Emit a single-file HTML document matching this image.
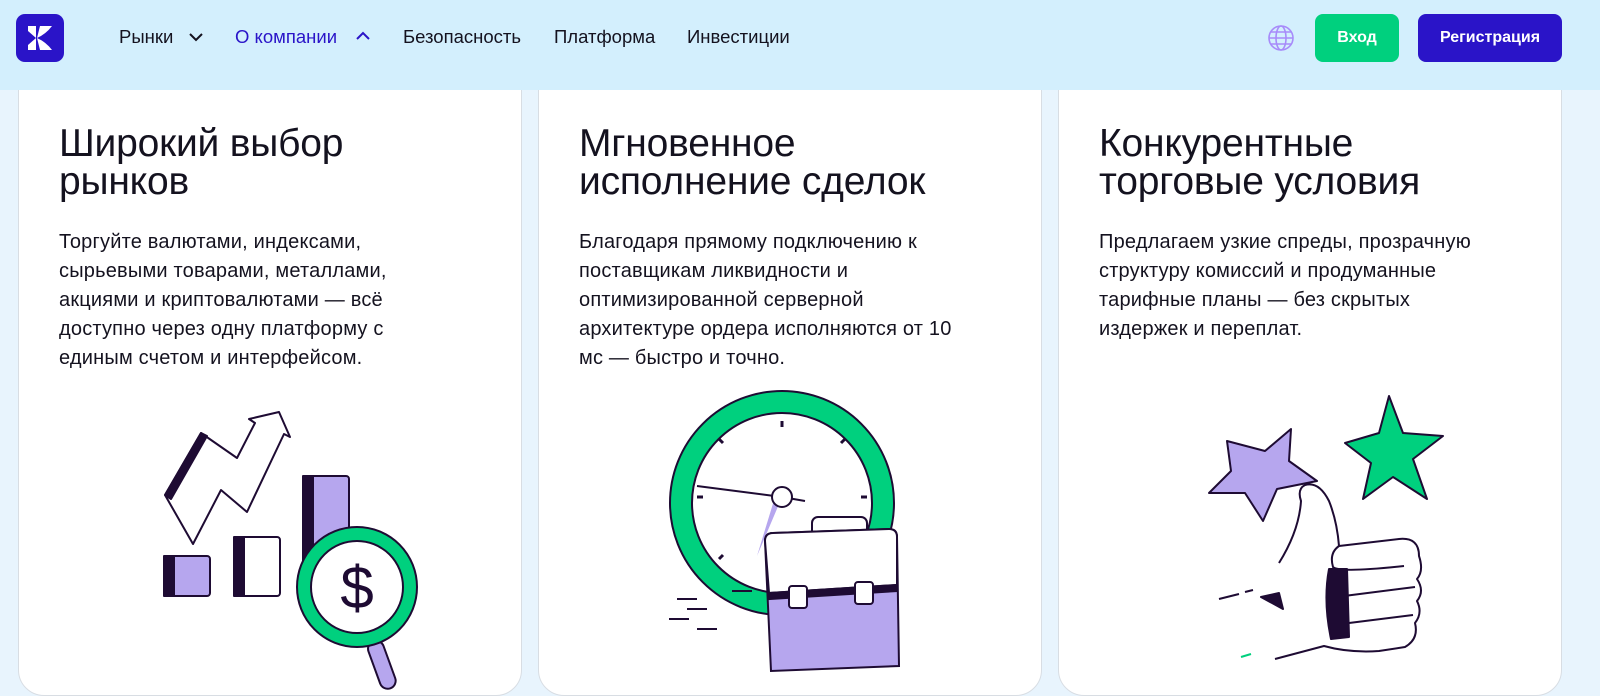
<!DOCTYPE html>
<html><head><meta charset="utf-8"><style>
*{margin:0;padding:0;box-sizing:border-box}
body{width:1600px;height:689px;overflow:hidden;background:#e8f4fd;font-family:"Liberation Sans",sans-serif;position:relative;color:#14121f}
.hdr{position:absolute;left:0;top:0;width:1600px;height:90px;background:#d3effd;z-index:2}
.logo{position:absolute;left:16px;top:14px;width:48px;height:48px;background:#2a14c8;border-radius:9px}
.nav{position:absolute;top:26px;font-size:18.5px;color:#14121f;white-space:nowrap}
.btn{position:absolute;top:14px;height:48px;border-radius:8px;color:#fff;font-size:16px;font-weight:bold;display:flex;align-items:center;justify-content:center}
.card{position:absolute;top:60px;width:504px;height:636px;background:#fff;border-radius:26px;border:1px solid #d8dde3}
.card h2{position:absolute;left:40px;top:64px;font-size:39px;font-weight:normal;line-height:38px;letter-spacing:-0.2px;white-space:nowrap}
.card p{position:absolute;left:40px;top:167px;font-size:20px;line-height:29px;letter-spacing:0.2px;white-space:nowrap}
.card svg{position:absolute;overflow:visible}
</style></head><body>
<div class="hdr">
 <div class="logo"><svg width="48" height="48" viewBox="0 0 48 48"><path d="M12 12h8v24h-8z" fill="#fff"/><path d="M21 24 Q30 20 36 12 L24 12 Z M21 24 Q30 28 36 36 L24 36 Z" fill="#fff"/><path d="M20 24 L12 17 L12 31Z" fill="#2a14c8"/></svg></div>
 <div class="nav" style="left:119px">Рынки</div>
 <svg style="position:absolute;left:188px;top:32px" width="16" height="10"><path d="M2 2l6 6 6-6" stroke="#14121f" stroke-width="2" fill="none"/></svg>
 <div class="nav" style="left:235px;color:#2a14c8">О компании</div>
 <svg style="position:absolute;left:355px;top:31px" width="16" height="10"><path d="M2 8l6-6 6 6" stroke="#2a14c8" stroke-width="2" fill="none"/></svg>
 <div class="nav" style="left:403px">Безопасность</div>
 <div class="nav" style="left:554px">Платформа</div>
 <div class="nav" style="left:687px">Инвестиции</div>
 <svg style="position:absolute;left:1267px;top:24px" width="28" height="28" viewBox="0 0 28 28" fill="none" stroke="#a78bfa" stroke-width="1.6"><circle cx="14" cy="14" r="12"/><ellipse cx="14" cy="14" rx="5" ry="12"/><path d="M2 14h24M4 8h20M4 20h20"/></svg>
 <div class="btn" style="left:1315px;width:84px;background:#00d07e">Вход</div>
 <div class="btn" style="left:1418px;width:144px;background:#2a14c8">Регистрация</div>
</div>

<div class="card" style="left:18px">
 <h2>Широкий выбор<br>рынков</h2>
 <p>Торгуйте валютами, индексами,<br>сырьевыми товарами, металлами,<br>акциями и криптовалютами — всё<br>доступно через одну платформу с<br>единым счетом и интерфейсом.</p>
 <svg style="left:140px;top:345px" width="240" height="260" viewBox="0 0 240 260" stroke="#1e0b33" stroke-width="2" stroke-linejoin="round">
  <path d="M6 81 L42 19 L78 44 L96 9 L90 5 L120 -2 L131 23 L125 20 L88 98 L62 76 L34 130 Z" fill="#fff" transform="translate(0,8)"/>
  <path d="M6 89 L42 27 L48 30 L12 93Z" fill="#1e0b33"/>
  <rect x="5" y="150" width="46" height="40" rx="3" fill="#b6a6ee"/><rect x="5" y="150" width="10" height="40" fill="#1e0b33"/>
  <rect x="75" y="131" width="46" height="59" rx="3" fill="#fff"/><rect x="75" y="131" width="10" height="59" fill="#1e0b33"/>
  <rect x="144" y="70" width="46" height="120" rx="3" fill="#b6a6ee"/><rect x="144" y="70" width="10" height="120" fill="#1e0b33"/>
  <rect x="208" y="235" width="16" height="50" rx="8" fill="#b6a6ee" transform="rotate(-20 216 240)"/>
  <circle cx="198" cy="181" r="60" fill="#00d07e"/><circle cx="198" cy="181" r="46" fill="#fff"/>
  <text x="198" y="202" font-size="60" text-anchor="middle" fill="#1e0b33" stroke="none" font-family="Liberation Sans">$</text>
 </svg>
</div>

<div class="card" style="left:538px">
 <h2>Мгновенное<br>исполнение сделок</h2>
 <p>Благодаря прямому подключению к<br>поставщикам ликвидности и<br>оптимизированной серверной<br>архитектуре ордера исполняются от 10<br>мс — быстро и точно.</p>
 <svg style="left:128px;top:330px" width="300" height="290" viewBox="0 0 300 290" stroke="#1e0b33" stroke-width="2">
  <circle cx="115" cy="112" r="112" fill="#00d07e"/><circle cx="115" cy="112" r="90" fill="#fff"/>
  <path d="M30 95 L115 106 L138 110" fill="none"/>
  <path d="M115 106 L90 165 L108 106Z" fill="#b6a6ee" stroke="none"/>
  <circle cx="115" cy="106" r="10" fill="#fff"/>
  <path d="M115 30v6M178 48l-4 4M52 48l4 4M200 106h-6M36 106h-6M52 168l4-4" stroke-width="3"/>
  <path d="M10 208h20M20 218h20M2 228h20M30 238h20M65 200h20" stroke-width="2"/>
  <rect x="145" y="126" width="55" height="28" rx="6" fill="#fff"/>
  <path d="M98 150 Q98 142 106 142 L222 138 Q230 138 230 146 L232 275 L104 280 Z" fill="#b6a6ee"/>
  <path d="M98 150 Q98 142 106 142 L222 138 Q230 138 230 146 L230 194 L102 202 Z" fill="#fff"/>
  <path d="M102 202 L230 194 L230 200 L102 208Z" fill="#1e0b33"/>
  <rect x="122" y="195" width="18" height="22" rx="3" fill="#fff"/><rect x="188" y="191" width="18" height="22" rx="3" fill="#fff"/>
 </svg>
</div>

<div class="card" style="left:1058px">
 <h2>Конкурентные<br>торговые условия</h2>
 <p>Предлагаем узкие спреды, прозрачную<br>структуру комиссий и продуманные<br>тарифные планы — без скрытых<br>издержек и переплат.</p>
 <svg style="left:120px;top:340px" width="260" height="260" viewBox="0 0 260 260" stroke="#1e0b33" stroke-width="2" stroke-linejoin="round">
  <path d="M48 40 L86 50 L112 28 L110 60 L138 80 L98 88 L84 120 L66 92 L30 92 L52 70Z" fill="#b6a6ee"/>
  <path d="M210 -5 L224 32 L264 35 L234 58 L248 98 L214 76 L184 98 L192 62 L166 42 L200 32Z" fill="#00d07e"/>
  <path d="M100 162 Q120 130 122 100 Q118 88 126 84 Q140 80 150 100 Q158 120 160 145 L220 138 Q240 136 240 155 Q245 170 238 178 Q246 190 238 200 Q244 212 236 222 Q240 238 226 246 L200 250 Q170 252 145 245 L96 258" fill="#fff"/>
  <path d="M160 145 Q150 152 154 166 Q160 172 225 165 M158 170 L150 190 M165 195 L236 186 M170 222 L234 214" fill="none"/>
  <path d="M150 168 L168 168 L170 236 L152 238 Q144 200 150 168Z" fill="#1e0b33"/>
  <path d="M82 196 L100 192 L104 208Z" fill="#1e0b33"/>
  <path d="M40 198 L60 193 M66 191 L74 189" fill="none"/>
  <path d="M62 256 L72 253" stroke="#00d07e"/>
 </svg>
</div>
</body></html>
